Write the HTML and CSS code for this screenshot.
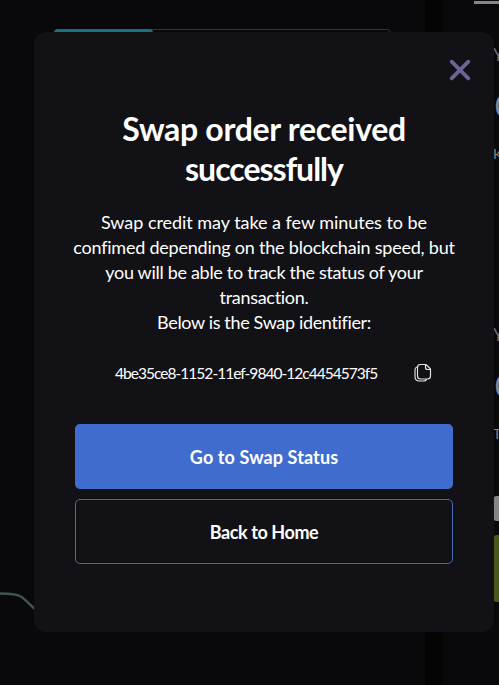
FILE: index.html
```html
<!DOCTYPE html>
<html lang="en">
<head>
  <meta charset="UTF-8">
  <title>Swap order</title>
  <meta name="viewport" content="width=device-width,initial-scale=1">
  <link rel="stylesheet" href="styles.css">
</head>
<body>
<div class="page">
  <!-- chart side -->
  <div class="chart-panel">
    <div class="tabs">
      <div class="tab-active"></div>
    </div>
    <svg class="chart" width="60" height="60" viewBox="0 0 60 60" fill="none">
      <path d="M0 13.500C7 13.500 16 14 21 16.500C26 20 31 26 36 30" stroke="#3f5554" stroke-width="2.500"/>
    </svg>
  </div>

  <!-- swap form side -->
  <div class="swap-panel">
    <div class="switch-bar"></div>
    <div class="field">
      <span class="label">Y</span>
      <span class="amount">0</span>
      <span class="coin">K</span>
    </div>
    <div class="field">
      <span class="label">Y</span>
      <span class="amount">0</span>
      <span class="coin">T</span>
    </div>
    <div class="rate"></div>
    <div class="swap-btn"></div>
  </div>
</div>

<!-- modal -->
<div class="modal">
  <button class="close" aria-label="Close">
    <svg width="22" height="22" viewBox="0 0 22 22" fill="none" stroke="#6d6395" stroke-width="3.800" stroke-linecap="round">
      <path d="M2.700 2.700L19.300 19.300M19.300 2.700L2.700 19.300"/>
    </svg>
  </button>
  <h1>Swap order received<br><span class="second">successfully</span></h1>
  <p class="info">
    <span class="l1">Swap credit may take a few minutes to be</span>
    <span class="l2">confimed depending on the blockchain speed, but</span>
    <span class="l3">you will be able to track the status of your</span>
    <span class="l4">transaction.</span>
    <span class="l5">Below is the Swap identifier:</span>
  </p>
  <div class="identifier">
    <span class="id-text">4be35ce8-1152-11ef-9840-12c4454573f5</span>
    <button class="copy" aria-label="Copy">
      <svg width="18" height="18" viewBox="0 0 18 18" fill="none" stroke="#e4e4e6" stroke-width="1.150" stroke-linejoin="round" stroke-linecap="round">
        <path d="M6.500 .5H12L16.500 5V12Q16.500 15 13.500 15H6.500Q3.500 15 3.500 12V3.500Q3.500 .5 6.500 .5Z"/>
        <path d="M11.500 1V3.500Q11.500 5.500 13.500 5.500H16"/>
        <path d="M3 3Q1 3.500 1 6V12.500Q1 17 5.500 17H9.500Q12 17 12.500 15.500"/>
      </svg>
    </button>
  </div>
  <div class="actions">
    <button class="btn btn-primary"><span>Go to Swap Status</span></button>
    <button class="btn btn-outline"><span>Back to Home</span></button>
  </div>
</div>
</body>
</html>
```

FILE: styles.css
```css
*{box-sizing:border-box}
body{margin:0;height:685px;overflow:hidden;background:#040404;color:#fff;font-family:Lato,"Liberation Sans",sans-serif}
button{padding:0;border:none;background:none;color:inherit;font-family:inherit;cursor:pointer}
svg{display:block}

/* page behind the modal */
.page{display:flex;gap:18px;height:685px;overflow:hidden}
.chart-panel{flex:0 0 425px;display:flex;flex-direction:column;justify-content:space-between;padding:29px 34px 45px 0;background:#09090b}
.tabs{width:337px;height:40px;margin-left:54px;border:1px solid #36333f;border-radius:4px}
.tab-active{width:99px;height:38px;margin:-1px 0 0 -1px;border-radius:4px;background:#177380}
.swap-panel{flex:0 0 300px;padding:1px 0 0 50px;background:#09090b}
.switch-bar{width:100px;height:3px;margin-left:-19px;background:#868488}
.field{display:flex;flex-direction:column;height:280px;padding-top:41px}
.label{height:44px;font-size:17px;line-height:20px;color:#77737c}
.amount{height:55px;padding-left:2px;font-size:30px;line-height:32px;color:#7d8ba6}
.coin{font-size:14px;line-height:20px;color:#858285}
.rate{width:100px;height:25px;margin-top:-68px;border-radius:4px;background:#858585}
.swap-btn{width:100px;height:67px;margin-top:14px;border-radius:4px;background:#465719}

/* modal */
.modal{position:absolute;left:34px;top:32px;width:460px;height:600px;padding:27px 30px 0;border-radius:12px;background:#121216;text-align:center}
.close{display:block;margin:0 -7px 0 auto}
h1{margin:28px 0 0;font-size:32px;line-height:40px;font-weight:700;letter-spacing:-.3px}
.second{letter-spacing:-1px}
.info{margin:21px 0 0;font-size:18px;line-height:25px;white-space:nowrap}
.info span{display:block}
.l1{letter-spacing:-.04px}
.l2{letter-spacing:-.22px}
.l3{letter-spacing:-.3px}
.l4{letter-spacing:-.3px}
.l5{letter-spacing:-.35px}
.identifier{display:flex;align-items:center;justify-content:space-between;height:30px;margin:23px 32px 0 51px}
.id-text{font-size:15.5px;line-height:20px;letter-spacing:-.97px;white-space:nowrap}
.actions{display:flex;flex-direction:column;gap:10px;margin:36px 11px 0}
.btn{height:65px;border-radius:5px;font-size:18px;line-height:24px;font-weight:700}
.btn-primary{background:#406ccf;letter-spacing:.1px}
.btn-outline{border:1px solid #4868b4;letter-spacing:-.4px}
```
